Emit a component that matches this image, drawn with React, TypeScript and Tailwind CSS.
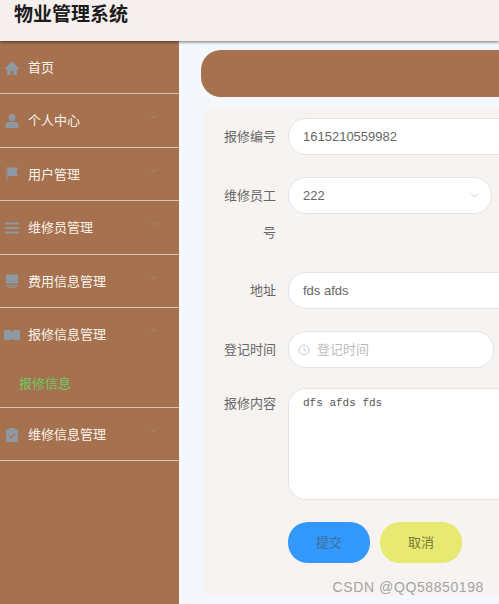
import { ChevronDown, ChevronUp, Clock } from 'lucide-react';
import type { ReactNode } from 'react';

const fontStack = { fontFamily: '"Liberation Sans", "Noto Sans CJK SC", sans-serif' };

const HomeIcon = () => (
  <svg viewBox="0 0 16 16" className="w-[16px] h-[16px] fill-[#8d98a3]">
    <path d="M8 1.5 1 8v1h2v6h3.5v-4h3v4H13V9h2V8z" />
  </svg>
);
const UserIcon = () => (
  <svg viewBox="0 0 16 16" className="w-[16px] h-[16px] fill-[#8d98a3]">
    <circle cx="8" cy="4.5" r="3.5" />
    <path d="M1.5 15v-2.5C1.5 10 3.5 9 5.5 9h5c2 0 4 1 4 3.5V15z" />
  </svg>
);
const FlagIcon = () => (
  <svg viewBox="0 0 16 16" className="w-[16px] h-[16px] fill-[#8d98a3]">
    <path d="M2.5 1h1v14h-1z" />
    <path d="M3.5 1.5H14l-1.5 4L14 10H3.5z" />
  </svg>
);
const ListIcon = () => (
  <svg viewBox="0 0 16 16" className="w-[16px] h-[16px] fill-[#8d98a3]">
    <path d="M1 2.5h14v2H1zM1 7h14v2H1zM1 11.5h14v2H1z" />
  </svg>
);
const BillIcon = () => (
  <svg viewBox="0 0 16 16" className="w-[16px] h-[16px] fill-[#8d98a3]">
    <path d="M2 1.5h12v9H2zM2 12h12v1.2H2zM3.5 14.2h9v.8h-9z" />
  </svg>
);
const RepairIcon = () => (
  <svg viewBox="0 0 16 16" className="w-[16px] h-[16px] fill-[#8d98a3]">
    <path d="M0 3h6l2 2 2-2h6v10h-6l-2-1-2 1H0z" />
  </svg>
);
const ClipboardIcon = () => (
  <svg viewBox="0 0 16 16" className="w-[16px] h-[16px]">
    <path className="fill-[#8d98a3]" d="M2 2.5h3V1h6v1.5h3V15H2z" />
    <path d="m5 8.5 2.2 2.2L11 6.8" fill="none" stroke="#a5714f" strokeWidth="1.2" />
  </svg>
);

const menu: { label: string; icon: ReactNode; arrow?: boolean }[] = [
  { label: '首页', icon: <HomeIcon /> },
  { label: '个人中心', icon: <UserIcon />, arrow: true },
  { label: '用户管理', icon: <FlagIcon />, arrow: true },
  { label: '维修员管理', icon: <ListIcon />, arrow: true },
  { label: '费用信息管理', icon: <BillIcon />, arrow: true },
];

const MenuRow = ({ label, icon, arrow, open }: { label: string; icon: ReactNode; arrow?: boolean; open?: boolean }) => (
  <div className="relative h-[52.4px] flex items-center pl-[4px] pr-[16px] pt-[1px] shrink-0">
    <span className="w-[16px] flex justify-center shrink-0">{icon}</span>
    <span className="ml-[8px] text-[13px] text-[#fbf3ea]">{label}</span>
    {arrow && (
      <span className="absolute right-[18px] top-[16px] text-[#b88a6c]">
        {open ? <ChevronUp className="w-[13px] h-[13px]" strokeWidth={1.5} /> : <ChevronDown className="w-[13px] h-[13px]" strokeWidth={1.5} />}
      </span>
    )}
  </div>
);

const Field = ({ label, children, className, labelClass }: { label: ReactNode; children: ReactNode; className?: string; labelClass?: string }) => (
  <div className={`flex items-start ${className ?? ''}`}>
    <div className={`w-[73px] shrink-0 text-right text-[13px] text-[#666666] ${labelClass ?? 'leading-[37px]'}`}>{label}</div>
    <div className="ml-[12px] flex-1 min-w-0">{children}</div>
  </div>
);

const inputCls = 'h-[37px] rounded-[18px] border border-[#e6e4e2] bg-white flex items-center text-[13px] text-[#666666]';

export default function App() {
  return (
    <div className="w-[499px] h-[604px] overflow-hidden relative flex flex-col bg-[#f4f7fb]" style={fontStack}>
      {/* Header */}
      <header className="h-[41px] shrink-0 bg-[#f5f0ee] flex items-start pl-[14px] shadow-[0_1px_3px_rgba(0,0,0,0.55)] relative z-10">
        <h1 className="text-[19px] leading-[29px] font-bold text-[#1c1c1c]">物业管理系统</h1>
      </header>

      <div className="flex flex-1 min-h-0">
        {/* Sidebar */}
        <aside className="w-[179px] shrink-0 bg-[#a5714f] flex flex-col">
          {menu.map(item => (
            <div key={item.label} className="border-b border-[#d9c3b4]">
              <MenuRow {...item} />
            </div>
          ))}
          <div className="border-b border-[#d9c3b4]">
            <MenuRow label="报修信息管理" icon={<RepairIcon />} arrow open />
            <div className="h-[46.6px] pl-[19px] pt-[1px] flex items-center text-[13px] text-[#6fc95f]">报修信息</div>
          </div>
          <div className="border-b border-[#d9c3b4]">
            <MenuRow label="维修信息管理" icon={<ClipboardIcon />} arrow />
          </div>
        </aside>

        {/* Content */}
        <main className="flex-1 min-w-0 pl-[22px] pt-[9px]">
          <div className="h-[47px] w-[340px] rounded-l-[20px] bg-[#a5714f]" />
          <div className="mt-[11px] ml-[2px] w-[340px] h-[487px] bg-[#f7f3f1] rounded-[6px] pt-[10px] pr-[20px]">
            <Field label="报修编号">
              <div className={`${inputCls} pl-[14px]`}>1615210559982</div>
            </Field>
            <Field
              className="mt-[22px]"
              label={
                <>
                  维修员工
                  <br />号
                </>
              }
            >
              <div className={`${inputCls} w-[204px] pl-[14px] pr-[10px] justify-between`}>
                222
                <ChevronDown className="w-[13px] h-[13px] text-[#c4c4c4]" strokeWidth={1.5} />
              </div>
            </Field>
            <Field label="地址" className="mt-[21px]">
              <div className={`${inputCls} pl-[14px]`}>fds afds</div>
            </Field>
            <Field label="登记时间" className="mt-[22px]">
              <div className={`${inputCls} w-[206px] pl-[9px] text-[#bdbdbd]`}>
                <Clock className="w-[12px] h-[12px] text-[#bdbdbd]" strokeWidth={1.5} />
                <span className="ml-[7px]">登记时间</span>
              </div>
            </Field>
            <Field label="报修内容" className="mt-[20px]" labelClass="leading-[32px]">
              <div className="h-[112px] rounded-[18px] border border-[#e6e4e2] bg-white pl-[14px] pt-[5px] text-[11px] leading-[18px] text-[#555555]" style={{ fontFamily: '"Liberation Mono", monospace' }}>
                dfs afds fds
              </div>
            </Field>
            <div className="mt-[22px] ml-[85px] flex gap-[10px]">
              <button className="w-[82px] h-[41px] rounded-[20px] bg-[#3398fb] text-[13px] text-[#3f6f9c]">提交</button>
              <button className="w-[82px] h-[41px] rounded-[20px] bg-[#e8e970] text-[13px] text-[#77773a]">取消</button>
            </div>
          </div>
        </main>
      </div>

      {/* Watermark */}
      <div className="absolute right-[15px] bottom-[9px] text-[14px] leading-[16px] tracking-[0.6px] text-[#a3a3a3]">CSDN @QQ58850198</div>
    </div>
  );
}
